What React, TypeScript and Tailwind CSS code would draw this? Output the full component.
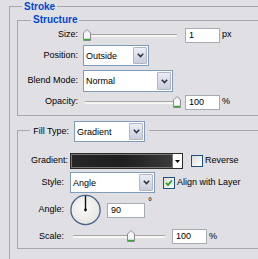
import React from 'react'

const BG = 'bg-[#e0dfe3]'

function Thumb() {
  return (
    <svg width="8" height="12" viewBox="0 0 8 12" className="absolute top-[-5px]">
      <path d="M0.5 4 L4 0.5 L7.5 4 L7.5 11.5 L0.5 11.5 Z" fill="#f6f6f8" stroke="#8d8c94" />
      <path d="M1 10.5 H7" stroke="#2fae2f" strokeWidth="1.5" />
    </svg>
  )
}

function Slider({ width, thumbLeft }: { width: string; thumbLeft: string }) {
  return (
    <div className={`relative h-[3px] ${width}`}>
      <div className="absolute left-[2px] right-[2px] top-0 h-[3px] border-t border-[#a4a3a8] bg-[#f7f6f2]" />
      <div className={`absolute top-0 ${thumbLeft}`}>
        <Thumb />
      </div>
    </div>
  )
}

function NumInput({ value, width }: { value: string; width: string }) {
  return (
    <div className={`${width} h-[15px] border border-[#a5acb4] bg-white pl-[3px] leading-[13px]`}>
      {value}
    </div>
  )
}

function Chevron() {
  return (
    <svg width="7" height="5" viewBox="0 0 7 5">
      <path d="M0.8 0.8 L3.5 3.6 L6.2 0.8" fill="none" stroke="#2e3344" strokeWidth="1.6" />
    </svg>
  )
}

function Select({ value, width, height = 'h-[21px]' }: { value: string; width: string; height?: string }) {
  return (
    <div className={`${width} ${height} flex border border-[#7f9db9] bg-white`}>
      <span className="flex-1 self-center pl-[2px] leading-[12px]">{value}</span>
      <div className="m-[1px] flex w-[14px] items-center justify-center rounded-[1px] border border-[#b3b6c8] bg-gradient-to-b from-[#eceef6] to-[#c9ccdb]">
        <Chevron />
      </div>
    </div>
  )
}

function Checkbox({ checked }: { checked?: boolean }) {
  return (
    <div className="flex h-[12px] w-[12px] shrink-0 items-center justify-center border border-[#1c5180] bg-gradient-to-br from-[#dcdcd7] to-white">
      {checked && (
        <svg width="8" height="8" viewBox="0 0 8 8">
          <path d="M1 3.8 L3 6 L7 1.5" fill="none" stroke="#21a121" strokeWidth="1.8" />
        </svg>
      )}
    </div>
  )
}

function Dial() {
  return (
    <svg width="31" height="32" viewBox="0 0 31 32">
      <defs>
        <radialGradient id="dialFill" cx="0.45" cy="0.4" r="0.6">
          <stop offset="0" stopColor="#fbfbfa" />
          <stop offset="1" stopColor="#e7e6e2" />
        </radialGradient>
      </defs>
      <circle cx="15.5" cy="16" r="14.6" fill="url(#dialFill)" stroke="#4a6288" strokeWidth="1.3" />
      <path d="M15.5 16 V1.8" stroke="#111" strokeWidth="1.4" />
      <circle cx="15.5" cy="16" r="1.4" fill="#111" />
    </svg>
  )
}

export default function App() {
  return (
    <div className={`h-[259px] w-[258px] overflow-hidden ${BG} font-['Liberation_Sans',Arial,sans-serif] text-[9px] text-black`}>
      {/* Stroke */}
      <div className="ml-[9px] mt-[6px] h-[260px] border-l border-t border-[#a8a7ac]">
        <div className={`-mt-[6px] ml-[12px] w-fit ${BG} px-[2px] text-[10px] font-bold leading-[12px] text-[#0046d5]`}>
          Stroke
        </div>

        {/* Structure */}
        <div className="ml-[7px] mt-[7px] border-b border-l border-t border-[#a8a7ac] pb-[5px]">
          <div className={`-mt-[7px] ml-[13px] w-fit ${BG} px-[2px] text-[10px] font-bold leading-[12px] text-[#0046d5]`}>
            Structure
          </div>

          <div className="mt-[1px] flex h-[16px] items-center">
            <span className="w-[60px] shrink-0 text-right">Size:</span>
            <div className="ml-[5px]">
              <Slider width="w-[96px]" thumbLeft="left-0" />
            </div>
            <div className="ml-[6px]">
              <NumInput value="1" width="w-[35px]" />
            </div>
            <span className="ml-[2px]">px</span>
          </div>

          <div className="mt-[2px] flex h-[21px] items-center">
            <span className="w-[60px] shrink-0 text-right">Position:</span>
            <div className="ml-[5px]">
              <Select value="Outside" width="w-[66px]" />
            </div>
          </div>

          <div className="mt-[4px] flex h-[22px] items-center">
            <span className="w-[60px] shrink-0 text-right">Blend Mode:</span>
            <div className="ml-[5px]">
              <Select value="Normal" width="w-[90px]" height="h-[22px]" />
            </div>
          </div>

          <div className="mt-[2px] flex h-[16px] items-center">
            <span className="w-[60px] shrink-0 text-right">Opacity:</span>
            <div className="ml-[5px]">
              <Slider width="w-[96px]" thumbLeft="left-[90px]" />
            </div>
            <div className="ml-[6px]">
              <NumInput value="100" width="w-[35px]" />
            </div>
            <span className="ml-[2px]">%</span>
          </div>
        </div>

        {/* Fill */}
        <div className="ml-[7px] mt-[14px] border-b border-l border-t border-[#a8a7ac] pb-[4px]">
          <div className={`-mt-[10px] ml-[12px] flex h-[21px] w-fit items-center ${BG} pl-[2px] pr-[4px]`}>
            <span className="w-[37px] text-right">Fill Type:</span>
            <div className="ml-[5px]">
              <Select value="Gradient" width="w-[71px]" />
            </div>
          </div>

          <div className="mt-[11px] flex h-[16px] items-center">
            <span className="w-[50px] shrink-0 text-right">Gradient:</span>
            <div className="ml-[2px] flex h-[16px] w-[113px] border border-[#2a2a2a] bg-white">
              <div className="flex-1 border border-[#777] bg-gradient-to-r from-[#262626] via-[#1e1e1e] to-[#3a3a3a]" />
              <div className="flex w-[9px] items-center justify-center">
                <svg width="5" height="3" viewBox="0 0 5 3">
                  <path d="M0 0 H5 L2.5 3 Z" fill="#000" />
                </svg>
              </div>
            </div>
            <div className="ml-[8px]">
              <Checkbox />
            </div>
            <span className="ml-[2px]">Reverse</span>
          </div>

          <div className="mt-[3px] flex h-[21px] items-center">
            <span className="w-[46px] shrink-0 text-right">Style:</span>
            <div className="ml-[6px]">
              <Select value="Angle" width="w-[85px]" />
            </div>
            <div className="ml-[8px]">
              <Checkbox checked />
            </div>
            <span className="ml-[2px]">Align with Layer</span>
          </div>

          <div className="mt-[1px] flex h-[32px] items-center">
            <span className="w-[46px] shrink-0 text-right">Angle:</span>
            <div className="ml-[6px] flex">
              <Dial />
            </div>
            <div className="ml-[6px]">
              <NumInput value="90" width="w-[38px]" />
            </div>
            <span className="ml-[3px] self-start pt-[3px] text-[10px] leading-[10px]">°</span>
          </div>

          <div className="mt-[3px] flex h-[15px] items-center">
            <span className="w-[46px] shrink-0 text-right">Scale:</span>
            <div className="ml-[7px]">
              <Slider width="w-[96px]" thumbLeft="left-[56px]" />
            </div>
            <div className="ml-[5px]">
              <NumInput value="100" width="w-[35px]" />
            </div>
            <span className="ml-[2px]">%</span>
          </div>
        </div>
      </div>
    </div>
  )
}
